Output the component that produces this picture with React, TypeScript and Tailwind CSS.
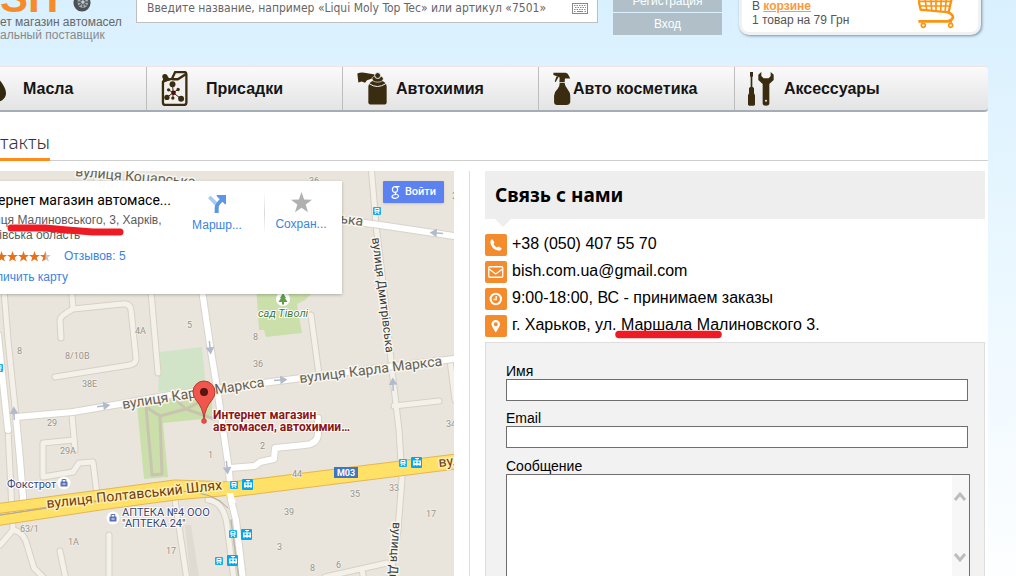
import React from "react";

const ARIAL = "font-['Liberation_Sans',Arial,sans-serif]";
const ROBOTO = "font-[Roboto,sans-serif]";
const NOTO = "font-['Noto_Sans',sans-serif]";

/* ---------- icons ---------- */

function Drop() {
  return (
    <svg width="6" height="28" viewBox="0 0 6 28" aria-hidden="true">
      <path d="M-4 0 C0 6 6 12 6 18 C6 23 2 27 -4 27Z" fill="#32270f" />
    </svg>
  );
}

function Canister() {
  return (
    <svg width="27" height="35" viewBox="0 0 80 106" aria-hidden="true">
      <path
        d="M5 32 V96 Q5 103 12 103 H68 Q76 103 76 96 V10 Q76 3 69 3 H42 L32 24 L10 28 Z"
        fill="#f1f0ee"
        stroke="#3a2c10"
        strokeWidth="7"
        strokeLinejoin="round"
      />
      <path d="M33 25 L50 25 L74 10" fill="none" stroke="#3a2c10" strokeWidth="7" />
      <circle cx="11" cy="17" r="8" fill="#3a2c10" />
      <path d="M6 20 L20 16 L26 28 L4 36Z" fill="#3a2c10" />
      <g stroke="#3a2c10" strokeWidth="3">
        <path d="M36 66 L34 40 M36 66 L52 55 M36 66 L22 57 M36 66 L17 80 M36 66 L60 84 M36 66 L35 82" />
      </g>
      <g fill="#3a2c10">
        <circle cx="34" cy="40" r="9" />
        <circle cx="51" cy="56" r="5" />
        <circle cx="22" cy="57" r="5" />
        <circle cx="17" cy="80" r="8" />
        <circle cx="60" cy="84" r="9" />
        <circle cx="35" cy="82" r="5" />
      </g>
      <circle cx="37" cy="66" r="7" fill="#4a0d12" />
    </svg>
  );
}

function SprayCan() {
  return (
    <svg width="30" height="33" viewBox="0 0 90 98" aria-hidden="true">
      <g fill="#3a2c10">
        <path d="M1 4 Q12 0 22 2 L54 7 V16 L30 24 L24 32 L14 28 L4 31Z" />
        <path d="M34 43 Q36 30 50 26 L72 26 Q88 30 89 43 V90 Q89 97 80 97 H43 Q34 97 34 90Z" />
      </g>
      <ellipse cx="62" cy="20" rx="17" ry="10" fill="#3a2c10" stroke="#f4f4f4" strokeWidth="2" />
      <circle cx="62" cy="10" r="9" fill="#3a2c10" stroke="#f4f4f4" strokeWidth="3" />
      <path d="M36 34 Q61 52 87 34" fill="none" stroke="#f4f4f4" strokeWidth="3" />
    </svg>
  );
}

function Trigger() {
  return (
    <svg width="18" height="33" viewBox="0 0 54 100" aria-hidden="true">
      <g fill="#3a2c10">
        <path d="M1 2 H38 Q44 3 47 10 L52 20 H36 L35 31 H19 L20 17 L14 14 L1 9Z" />
        <path d="M18 13 L8 30 L5 29 L10 14Z" />
        <path d="M20 33 H35 Q36 44 44 52 Q52 62 52 72 V92 Q50 100 42 100 H12 Q4 100 3 92 V72 Q4 60 14 51 Q20 44 20 33Z" />
      </g>
    </svg>
  );
}

function Tools() {
  return (
    <svg width="26" height="34" viewBox="0 0 78 102" aria-hidden="true">
      <g fill="#3a2c10">
        <path d="M6 0 H15 V12 L13 16 V44 L18 48 V64 L21 70 V98 L18 101 H3 L0 98 V70 L3 64 V48 L8 44 V16 L6 12Z" />
        <path d="M40 0 L31 8 V24 L44 36 V96 Q45 101 54 101 Q63 101 64 96 V36 L77 24 V8 L68 0 L68 12 L62 19 H47 L40 12Z" />
      </g>
      <circle cx="54" cy="86" r="3" fill="#eee" />
    </svg>
  );
}

function Cart() {
  return (
    <svg width="37" height="39" viewBox="0 0 111 117" fill="none" stroke="#fb9410" aria-hidden="true">
      <path d="M-1 20 L8 59 L92 67 L102 20" strokeWidth="7" />
      <path d="M0 34 H100 M5 48 H97 M20 18 L26 60 M38 18 L41 61 M54 18 V62 M70 18 L68 64 M86 18 L81 66" strokeWidth="5" />
      <path d="M88 66 Q106 74 105 82 Q103 90 90 94 M1 94 H102" strokeWidth="8" />
      <circle cx="16" cy="106" r="6" strokeWidth="5" />
      <circle cx="98" cy="106" r="6" strokeWidth="5" />
    </svg>
  );
}

function Wheel() {
  return (
    <svg width="18" height="18" viewBox="0 0 20 20" aria-hidden="true">
      <circle cx="10" cy="10" r="9.5" fill="#4b5157" />
      <ellipse cx="11" cy="9" rx="6" ry="6.500" fill="#a3abb1" />
      <path d="M11 3 V15 M5 9 H17 M7 5 L15 13 M15 5 L7 13" stroke="#454b50" strokeWidth="1.3" />
      <circle cx="11" cy="9" r="2" fill="#c6ccd0" />
    </svg>
  );
}

function Keyboard() {
  return (
    <svg width="16" height="11" viewBox="0 0 16 11" aria-hidden="true">
      <rect x="0.5" y="0.5" width="15" height="10" fill="#fff" stroke="#8a8a8a" />
      <path d="M2 2.5 H14 M3 4.5 H14 M2 6.5 H14" stroke="#8a8a8a" strokeDasharray="1.5 1" />
      <path d="M2 8.5 H3.5 M5 8.5 H11 M12.500 8.5 H14" stroke="#8a8a8a" />
    </svg>
  );
}

function Directions() {
  return (
    <svg width="18" height="18" viewBox="0 0 54 54" aria-hidden="true">
      <path d="M0 9 L8 2 L28 22 L20 31Z" fill="#a9caf3" />
      <path d="M20 54 V38 Q20 29 27 22 L35 13 L26 3 V0 H54 V28 H51 L43 20 L35 29 Q32 33 32 38 V54Z" fill="#5b97e5" />
    </svg>
  );
}

const STAR = "M10 0 L12.500 7.200 L20 7.300 L14 12 L16.200 19.200 L10 15 L3.800 19.200 L6 12 L0 7.300 L7.500 7.200Z";

function Star({ className, half }: { className: string; half?: boolean }) {
  return (
    <svg className={className} viewBox="0 0 20 20" aria-hidden="true">
      <path d={STAR} fill={half ? "#c9c9c9" : "currentColor"} />
      {half && <path d="M10 0 V15 L3.800 19.200 L6 12 L0 7.300 L7.500 7.200Z" fill="currentColor" />}
    </svg>
  );
}

function Tile({ children }: { children: React.ReactNode }) {
  return (
    <svg className="shrink-0" width="22" height="22" viewBox="0 0 22 22" aria-hidden="true">
      <rect width="22" height="22" rx="2" fill="#f48b2d" />
      {children}
    </svg>
  );
}

/* ---------- map ---------- */

const CREAM = [
  "M4 290 L8 340 L16 417",
  "M61 338 L60 320 Q60 316 73 309 L122 304 Q130 303 131 310 L136 358 Q136 364 130 365 L55 377",
  "M71 285 L73 308",
  "M150 280 L158 373",
  "M311 315 L319 375",
  "M371 165 L376 225 L385 300 L392 370 L399 430 L402 478 L398 530 L390 580",
  "M394 406 L439 401",
  "M450 360 L455 400",
  "M72 415 L75 450",
  "M74 440 L43 443 L43 477 L73 472 L79 463 L93 462 L97 495",
  "M109 535 V580",
  "M60 551 L66 580",
  "M175 500 L187 580",
  "M8 430 L13 530 L0 545",
  "M13 530 Q24 532 27 545 L34 568 L46 580",
  "M325 577 L387 563",
  "M362 570 L364 580",
  "M208 500 Q224 502 227 525 L234 580",
  "M98 165 L96 190",
];
const WHITE = [
  "M-2 335 L8 430",
  "M16 417 L20 460 L24 510",
  "M16 417 L73 412 L120 404 L170 395 L263 383 L387 367 L454 359",
  "M202 290 L210 345 L217 388 L229 470 L231 500 L236 520 L243 580",
  "M335 219 L380 225 L454 236",
  "M318 418 V433 Q318 444 305 445 L275 448 L274 459 L260 462 L255 466 L230 468",
];

const HOUSES: [number, number, string][] = [
  [17, 354, "8"], [65, 359, "8/10В"], [135, 334, "4А"], [82, 387, "38Е"], [187, 328, "5"],
  [47, 426, "29"], [60, 454, "29А"], [208, 458, "1"], [20, 532, "63/1"], [68, 545, "1А"],
  [166, 554, "17"], [253, 340, "8"], [253, 367, "36"], [260, 449, "2"], [292, 477, "44"],
  [350, 497, "35"], [389, 491, "33"], [284, 515, "39"], [426, 517, "17"], [277, 550, "3"],
  [310, 571, "8"], [336, 568, "6"], [446, 427, "34"], [309, 184, "36"], [452, 199, "2"],
];

const BUS: [number, number][] = [[373, 207], [230, 481], [399, 459], [229, 530], [215, 557], [-5, 364]];
const TRAM: [number, number][] = [[242, 479], [411, 457], [241, 529], [227, 555]];

function Arrow({ x, y, turn }: { x: number; y: number; turn: number }) {
  return (
    <path
      d="M-6 0 H3 M1 -3 L6 0 L1 3Z"
      transform={`translate(${x} ${y}) rotate(${turn})`}
      stroke="#b2bacd"
      strokeWidth="1.5"
      fill="#b2bacd"
    />
  );
}

function Shop({ x, y }: { x: number; y: number }) {
  return (
    <g transform={`translate(${x} ${y})`}>
      <circle r="6.500" fill="#fff" />
      <rect x="-3.500" y="-1.500" width="7" height="5" rx="0.5" fill="#5a70b8" />
      <path d="M-1.800 -1 V-3.500 H1.800 V-1" fill="none" stroke="#5a70b8" />
      <path d="M-1.500 1 H1.500" stroke="#fff" />
    </g>
  );
}

function StreetMap() {
  return (
    <svg
      className="block h-[405px] w-full"
      viewBox="0 171 454 405"
      preserveAspectRatio="xMinYMin slice"
      fontFamily="Roboto, sans-serif"
      role="img"
      aria-label="Карта"
    >
      <rect y="171" width="454" height="405" fill="#e9e5dc" />
      <path d="M185 525 L191 525 L199 576 H190Z" fill="#dfdbd3" />
      <path d="M160 352 L202 347 L206 388 L158 392Z" fill="#d2e4c8" />
      <path d="M137 405 L212 393 V418 L163 423 L168 477 L144 479Z" fill="#cadfaa" />
      <path d="M256 285 H320 L305 300 L297 304 L302 333 L266 337 L264 330 H259Z" fill="#cadfaa" />
      <g fill="none" strokeLinecap="round" strokeLinejoin="round">
        <path
          d="M146 406 L152 475 L162 474 L160 416 L146 407 M160 416 L186 409 L212 396 M176 400 L186 409 L214 419"
          stroke="#c8c4b0"
          strokeWidth="3"
        />
        {CREAM.map((d) => <path key={d} d={d} stroke="#d6d1c4" strokeWidth="7" />)}
        {CREAM.map((d) => <path key={d} d={d} stroke="#f4f1ea" strokeWidth="5" />)}
        {WHITE.map((d) => <path key={d} d={d} stroke="#d9d4c9" strokeWidth="8" />)}
        {WHITE.map((d) => <path key={d} d={d} stroke="#fff" strokeWidth="6" />)}
        <path d="M-5 521 L100 505 L175 495 L232 490" stroke="#e3b655" strokeWidth="11" />
        <path d="M-5 509 L100 495 L175 485 L232 487" stroke="#e3b655" strokeWidth="11" />
        <path d="M-5 521 L100 505 L175 495 L232 490" stroke="#ffe168" strokeWidth="9" />
        <path d="M-5 509 L100 495 L175 485 L232 487" stroke="#ffe168" strokeWidth="9" />
        <path d="M0 515 L60 506 L110 500 L180 491 Q215 492 228 508" stroke="#aaa89c" />
        <path d="M231 520 L239 580" stroke="#b9b6ad" strokeWidth="1.5" />
      </g>
      <path d="M226 482 L456 454 V469 L226 498Z" fill="#ffe168" />
      <path d="M232 482 L456 454 M232 497 L456 469" stroke="#e3b655" />
      <path d="M227 493 H233 L236 503 H229Z" fill="#fff" />
      <Arrow x={103} y={406} turn={-8} />
      <Arrow x={280} y={380} turn={-4} />
      <Arrow x={210} y={347} turn={84} />
      <Arrow x={227} y={467} turn={84} />
      <Arrow x={14} y={414} turn={-92} />
      <Arrow x={393} y={385} turn={-92} />
      <Arrow x={437} y={233} turn={184} />

      <g fontSize="9" fill="#96938b" stroke="#f2efe8" strokeWidth="1.500" paintOrder="stroke">
        {HOUSES.map(([x, y, t]) => <text key={`${x}-${y}`} x={x} y={y}>{t}</text>)}
      </g>
      <g fontSize="14" fill="#66604f" stroke="#f8f6f1" strokeWidth="3" strokeLinejoin="round" paintOrder="stroke">
        <text transform="translate(75 176) rotate(5)">вулиця Коцарська</text>
        <text transform="translate(340 223) rotate(8)">ька</text>
        <text transform="translate(123 409) rotate(-9)">вулиця Карла Маркса</text>
        <text transform="translate(300 383) rotate(-7)">вулиця Карла Маркса</text>
      </g>
      <g fontSize="12" fill="#3c3a33" stroke="#f8f6f1" strokeWidth="3" strokeLinejoin="round" paintOrder="stroke">
        <text transform="translate(372 238) rotate(83)">вулиця Дмитрівська</text>
        <text transform="translate(393 522) rotate(94)">вулиця Дмитрівська</text>
      </g>
      <g fontSize="14" fill="#6d3c10" stroke="#ffefb0" strokeWidth="3" strokeLinejoin="round" paintOrder="stroke">
        <text transform="translate(47 508) rotate(-6)">вулиця Полтавський Шлях</text>
        <text transform="translate(439 467) rotate(-6)">вулиця</text>
      </g>

      {BUS.map(([x, y]) => (
        <g key={`${x}-${y}`} transform={`translate(${x} ${y})`}>
          <rect width="8" height="8" rx="1" fill="#17aef2" />
          <path d="M2 1.500 H6 V5 H2Z M2 3.500 H6 M2 7 L3 5.500 M6 7 L5 5.500" fill="none" stroke="#fff" />
        </g>
      ))}
      {TRAM.map(([x, y]) => (
        <g key={`${x}-${y}`} transform={`translate(${x} ${y})`}>
          <rect width="11" height="11" rx="1" fill="#00a8f3" />
          <path d="M4 1.500 H8 M6 1.500 V3.500" fill="none" stroke="#fff" />
          <path d="M2 3.500 H10 V8.500 H2Z" fill="#fff" />
          <path d="M3.500 4.500 H5.300 V6.300 H3.500Z M6.700 4.500 H8.500 V6.300 H6.700Z M4 8 H5 V9 H4Z M7 8 H8 V9 H7Z" fill="#00a8f3" />
        </g>
      ))}

      <rect x="334" y="467" width="24" height="11" fill="#3f76c4" />
      <text x="346" y="476" textAnchor="middle" fontSize="9" fontWeight="700" fill="#fff">М03</text>

      <circle cx="283" cy="299" r="7" fill="#fff" />
      <path d="M283 293 L286 298 H285 L287.500 302 H284 V304.500 H282 V302 H278.500 L281 298 H280Z" fill="#5fa044" />
      <text x="258" y="317" fontSize="11" fontStyle="italic" fill="#3f7a35" stroke="#fff" strokeWidth="2" paintOrder="stroke">сад Тіволі</text>

      <g fontSize="11" fill="#3b4673" stroke="#fff" strokeWidth="2" paintOrder="stroke">
        <text x="7" y="488">Фокстрот</text>
        <text x="122" y="516">АПТЕКА №4 ООО</text>
        <text x="122" y="527">"АПТЕКА 24"</text>
      </g>
      <Shop x={64} y={483} />
      <Shop x={113} y={518} />

      <g fontSize="12" fontWeight="700" fill="#8e1414" stroke="#fff" strokeWidth="2" paintOrder="stroke">
        <text x="213" y="419">Интернет магазин</text>
        <text x="213" y="431">автомасел, автохимии…</text>
      </g>
      <path
        d="M204 419 Q203 408 196 400 Q193 396 193 392 A11 11 0 0 1 215 392 Q215 396 212 400 Q205 408 204 419Z"
        fill="#f2554c"
        stroke="#b53a33"
      />
      <circle cx="204" cy="392" r="4" fill="#571611" />
      <circle cx="204" cy="421" r="2.500" fill="#ee4b44" stroke="#b53a33" strokeWidth="0.500" />
    </svg>
  );
}

function PlaceCard() {
  return (
    <div className={`absolute left-0 top-[10px] flex h-[113px] w-[342px] overflow-hidden bg-white text-[12px] leading-[15px] shadow-[0_1px_3px_rgba(0,0,0,0.25)] ${ARIAL}`}>
      <div className="-ml-[6px] w-[196px] shrink-0 whitespace-nowrap pt-[10px]">
        <h2 className={`pl-[4px] text-[14px] leading-[18px] text-black ${ROBOTO}`}>ернет магазин автомасе...</h2>
        <p className="relative mt-1 text-[#5b5b5b]">
          иця Малиновського, 3, Харків,
          <br />
          ківська область
          <svg className="absolute left-[13px] top-[11px]" width="118" height="12" viewBox="0 0 118 12" aria-hidden="true">
            <path d="M4 4 L38 4 L60 6 L86 8 H113" fill="none" stroke="#ed1c24" strokeWidth="7" strokeLinecap="round" strokeLinejoin="round" />
          </svg>
        </p>
        <div className="mt-[6px] flex items-center">
          <span className="flex pl-[2px] text-[#e7711b]">
            <Star className="size-[11px]" />
            <Star className="size-[11px]" />
            <Star className="size-[11px]" />
            <Star className="size-[11px]" />
            <Star className="size-[11px]" half />
          </span>
          <a href="#reviews" className="ml-[13px] text-[#3a84df]">Отзывов: 5</a>
        </div>
        <a href="#zoom" className="mt-[6px] block pl-[2px] text-[#3a84df]">личить карту</a>
      </div>
      <a href="#route" className="flex w-[54px] flex-col items-center gap-1 pt-[14px] text-[#3a84df]">
        <Directions />
        <span className="leading-[17px]">Маршр...</span>
      </a>
      <div className="ml-[20px] mt-[11px] h-[42px] w-px bg-gradient-to-b from-white via-[#d8d8d8] to-white" />
      <a href="#save" className="flex w-[72px] flex-col items-center gap-[2px] pt-[11px] text-[#3a84df]">
        <Star className="size-[21px] text-[#b0b0b0]" />
        <span className="leading-[19px]">Сохран...</span>
      </a>
    </div>
  );
}

/* ---------- page parts ---------- */

function Header() {
  return (
    <header className="flex h-[66px] items-start overflow-hidden">
      <div className={`w-[136px] shrink-0 whitespace-nowrap text-[12px] leading-[13px] ${ARIAL}`}>
        <div className="flex h-[16px] items-end">
          <span className="-mb-[3px] w-[73px] shrink-0 text-[42px] font-bold leading-[42px] text-[#f68b2c]">SH</span>
          <span className="mb-[4px]"><Wheel /></span>
        </div>
        <p className="text-[#686868]">ет магазин автомасел</p>
        <p className="text-[#8a8a8a]">альный поставщик</p>
      </div>
      <form className="-mt-[7px] flex h-[30px] min-w-0 flex-1 items-center border border-[#bfbfbf] bg-white pr-[9px]">
        <input
          type="search"
          aria-label="Поиск"
          placeholder="Введите название, например «Liqui Moly Top Tec» или артикул «7501»"
          className="h-full min-w-0 flex-1 bg-transparent pl-[10px] font-['DejaVu_Sans_Condensed','DejaVu_Sans',sans-serif] text-[12px] outline-none placeholder:text-[#666]"
        />
        <Keyboard />
      </form>
      <div className={`-mt-[10px] ml-[15px] flex w-[109px] flex-col gap-px text-center text-[12px] leading-[22px] text-white ${ARIAL}`}>
        <a href="#register" className="bg-[#b0bfc8]">Регистрация</a>
        <a href="#login" className="bg-[#b0bfc8]">Вход</a>
      </div>
      <div className={`-mt-[13px] ml-[17px] mr-[7px] flex h-[48px] w-[242px] justify-between rounded-b-[10px] border-[3px] border-[#f0f1f2] bg-white pl-[10px] pr-[23px] text-[12px] leading-[14px] text-[#555] shadow-[1px_1px_3px_rgba(60,80,100,0.6)] ${ARIAL}`}>
        <p className="pt-[9px]">
          В <a href="#cart" className="font-bold text-[#f99a3c] underline">корзине</a>
          <br />
          1 товар на 79 Грн
        </p>
        <Cart />
      </div>
    </header>
  );
}

function NavItem({ className, children }: { className: string; children: React.ReactNode }) {
  return (
    <a href="#catalog" className={`flex items-center whitespace-nowrap ${className}`}>
      {children}
    </a>
  );
}

function Nav() {
  return (
    <nav className={`flex h-[46px] rounded-r-[4px] border-b-2 border-t border-b-[#a4adb6] border-t-[#f0e3e3] bg-gradient-to-b from-[#fafafa] to-[#e4e4e4] text-[16px] font-bold text-[#151515] ${ARIAL}`}>
      <NavItem className="w-[146px] gap-[17px]"><Drop />Масла</NavItem>
      <NavItem className="w-[196px] gap-[18px] border-l border-[#bdbdbd] pl-[14px]"><Canister />Присадки</NavItem>
      <NavItem className="w-[196px] gap-[9px] border-l border-[#bdbdbd] pl-[14px]"><SprayCan />Автохимия</NavItem>
      <NavItem className="w-[196px] gap-[2px] border-l border-[#bdbdbd] pl-[14px]"><Trigger />Авто косметика</NavItem>
      <NavItem className="flex-1 gap-[10px] border-l border-[#bdbdbd] pl-[13px]"><Tools />Аксессуары</NavItem>
    </nav>
  );
}

function Contacts() {
  return (
    <ul className={`mt-[15px] flex flex-col gap-[5px] text-[16px] leading-[20px] text-black ${ARIAL}`}>
      <li className="flex gap-[5px]">
        <Tile>
          <path d="M7.500 5.300 L9.500 8.500 L8.500 10 Q9.500 12.500 12 13.500 L13.500 12.500 L16.700 14.300 Q16.500 16.700 14 16.700 Q6 15.500 5.300 8 Q5.300 5.500 7.500 5.300Z" fill="#fff" />
        </Tile>
        +38 (050) 407 55 70
      </li>
      <li className="flex gap-[5px]">
        <Tile>
          <rect x="3.750" y="5.750" width="14" height="10.500" rx="1" fill="none" stroke="#fff" strokeWidth="1.300" />
          <path d="M4 8 L10.800 13 L17.500 8" fill="none" stroke="#fff" strokeWidth="1.300" />
        </Tile>
        bish.com.ua@gmail.com
      </li>
      <li className="flex gap-[5px]">
        <Tile>
          <circle cx="10.800" cy="11" r="5.200" fill="none" stroke="#fff" strokeWidth="2" />
          <path d="M11.200 8 V11.500 H8.500" fill="none" stroke="#fff" strokeWidth="1.300" />
        </Tile>
        9:00-18:00, ВС - принимаем заказы
      </li>
      <li className="flex gap-[5px]">
        <Tile>
          <path fillRule="evenodd" d="M10.800 5 A4.200 4.200 0 0 1 15 9.200 Q15 11 10.800 17.500 Q6.500 11 6.500 9.200 A4.200 4.200 0 0 1 10.800 5Z M10.800 7.200 A2 2 0 1 0 10.800 11.200 A2 2 0 1 0 10.800 7.200Z" fill="#fff" />
        </Tile>
        <span className="relative">
          г. Харьков, ул. Маршала Малиновского 3.
          <svg className="absolute left-[102px] top-[15px]" width="109" height="9" viewBox="0 0 109 9" aria-hidden="true">
            <path d="M5 4.500 H104" stroke="#ed1c24" strokeWidth="7.500" strokeLinecap="round" />
          </svg>
        </span>
      </li>
    </ul>
  );
}

function ContactForm() {
  return (
    <form className={`mt-[5px] flex h-[300px] flex-col border border-[#dedede] bg-[#f2f2f2] pl-[20px] pr-[14px] pt-[20px] text-[14px] leading-[16px] text-black ${ARIAL}`}>
      <label htmlFor="name">Имя</label>
      <input id="name" type="text" className="mr-[2px] h-[22px] border border-[#6f6f6f] bg-white px-1" />
      <label htmlFor="email" className="mt-[9px]">Email</label>
      <input id="email" type="email" className="mr-[2px] h-[22px] border border-[#6f6f6f] bg-white px-1" />
      <label htmlFor="message" className="mt-[10px]">Сообщение</label>
      <div className="flex h-[160px] border border-[#6f6f6f] bg-white">
        <textarea id="message" className="min-w-0 flex-1 resize-none bg-white p-1 outline-none" />
        <svg className="h-[105px] w-[17px] shrink-0 bg-[#f7f7f7]" viewBox="0 0 17 105" fill="none" stroke="#bdbdbd" strokeWidth="3" aria-hidden="true">
          <path d="M3 25 L8 19 L13 25 M3 79 L8 85 L13 79" />
        </svg>
      </div>
    </form>
  );
}

export default function App() {
  return (
    <div className="h-screen overflow-hidden bg-gradient-to-b from-[#d9f0fe] via-[#ecf8ff] to-[#fdfeff] pr-[28px]">
      <Header />
      <Nav />
      <main className="min-h-full bg-white">
        <div className="flex h-[49px] items-end border-b border-[#cfcfcf]">
          <h1 className={`-mb-px border-b-[3px] border-[#ff8c1a] pb-[3px] text-[19px] font-light leading-[26px] text-[#333] ${NOTO}`}>такты</h1>
        </div>
        <div className="flex pr-[3px] pt-[10px]">
          <section className="relative min-w-0 flex-1">
            <StreetMap />
            <PlaceCard />
            <button type="button" className={`absolute right-[10px] top-[10px] flex h-[22px] w-[61px] items-center justify-center gap-[5px] rounded-[1px] bg-[#5b82f0] text-[11px] font-medium text-white shadow-sm ${ROBOTO}`}>
              <svg width="9" height="13" viewBox="0 0 9 13" fill="none" stroke="#fff" strokeWidth="1.200" aria-hidden="true">
                <ellipse cx="4" cy="3.500" rx="2.600" ry="2.800" />
                <path d="M4 0.700 H8.500 M5 6.300 Q3.500 7 5 8 Q8 9 7.500 10.500 Q6.500 12.400 4 12.300 Q1 12.200 1 10.500 Q1.200 8.800 5 8.500" />
              </svg>
              Войти
            </button>
          </section>
          <aside className="ml-[15px] w-[516px] shrink-0 border-l border-[#dcdcdc] pl-[15px]">
            <div className="relative flex h-[48px] items-center bg-[#eee] pl-[10px]">
              <h2 className={`text-[19px] font-bold text-black ${NOTO}`}>Связь с нами</h2>
              <svg className="absolute left-[10px] top-[48px]" width="16" height="8" viewBox="0 0 16 8" aria-hidden="true">
                <path d="M0 0 H16 L8 8Z" fill="#eee" />
              </svg>
            </div>
            <Contacts />
            <ContactForm />
          </aside>
        </div>
      </main>
    </div>
  );
}
